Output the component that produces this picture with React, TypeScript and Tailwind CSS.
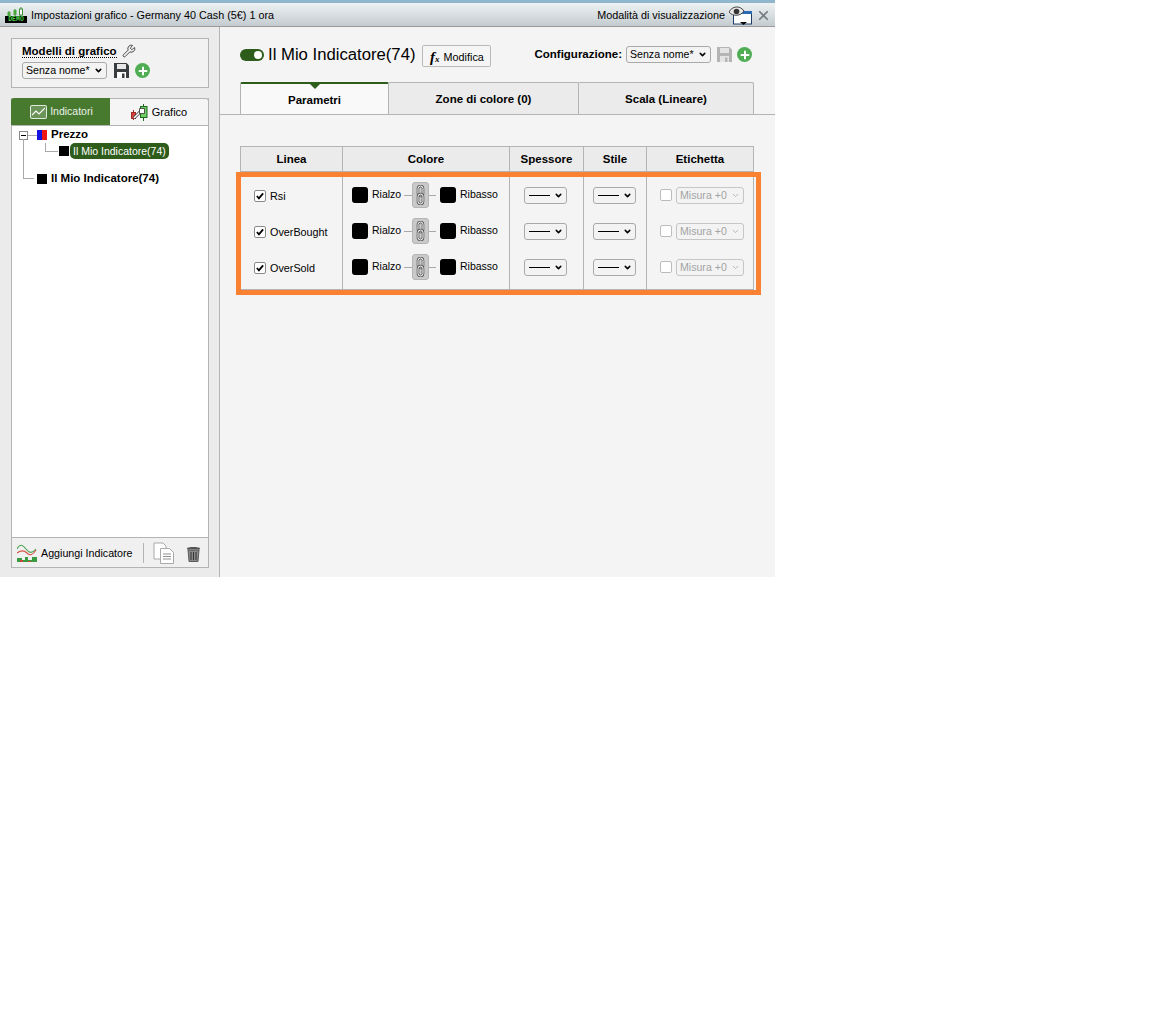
import React from 'react';
import { ChevronDown, Plus, Wrench, X } from 'lucide-react';

const font = "font-['Liberation_Sans',Arial,sans-serif]";

const SaveIcon = ({ muted = false }: { muted?: boolean }) => (
  <svg width="15" height="15" viewBox="0 0 15 15">
    <path d="M0 0h12.500L15 2.500V15H0z" fill={muted ? '#b5b5b5' : '#3a3d40'} />
    <rect x="3" y="1" width="9" height="5" fill={muted ? '#e4e4e4' : '#e8e8e8'} />
    <rect x="3" y="9" width="9" height="6" fill={muted ? '#e4e4e4' : '#fff'} />
    <rect x="8" y="10.500" width="2.500" height="4.500" fill={muted ? '#b5b5b5' : '#3a3d40'} />
  </svg>
);

const AddIcon = () => (
  <span className="flex h-[15px] w-[15px] items-center justify-center rounded-full bg-[#4fae54]">
    <Plus size={12} strokeWidth={4} className="text-white" />
  </span>
);

const FakeSelect = ({ label, className, disabled = false }: { label: React.ReactNode; className: string; disabled?: boolean }) => (
  <div
    className={`flex h-[17px] items-center justify-between rounded-[3px] border bg-[#f3f3f3] pl-[3px] pr-[3px] text-[10.600px] ${
      disabled ? 'border-[#c6c6c6] text-[#a3a3a3]' : 'border-[#a9a9a9] text-black'
    } ${className}`}
  >
    <span className="whitespace-nowrap leading-none">{label}</span>
    <ChevronDown size={9} strokeWidth={disabled ? 2 : 4} className={disabled ? 'text-[#a3a3a3]' : 'text-black'} />
  </div>
);

const LineSelect = () => (
  <FakeSelect className="w-[43px]" label={<span className="ml-px block h-px w-[21px] bg-black" />} />
);

const Checkbox = ({ checked = false }: { checked?: boolean }) => (
  <span
    className={`flex h-[12px] w-[12px] shrink-0 items-center justify-center rounded-[2px] border bg-white ${
      checked ? 'border-[#8a8a8a]' : 'border-[#bcbcbc]'
    }`}
  >
    {checked && (
      <svg width="8" height="8" viewBox="0 0 9 9">
        <path d="M1 4.500l2.300 2.600L8 1.500" fill="none" stroke="#000" strokeWidth="2" />
      </svg>
    )}
  </span>
);

const ChainIcon = () => (
  <span className="flex h-[26px] w-[17px] shrink-0 items-center justify-center rounded-[3px] border border-[#b5b5b5] bg-[#c9c9c9]">
    <svg width="11" height="20" viewBox="0 0 11 20" fill="none">
      <rect x="3" y="1" width="5" height="10" rx="2.500" stroke="#555" strokeWidth="2.600" />
      <rect x="3" y="1" width="5" height="10" rx="2.500" stroke="#fff" strokeWidth="1" />
      <rect x="3" y="9" width="5" height="10" rx="2.500" stroke="#555" strokeWidth="2.600" />
      <rect x="3" y="9" width="5" height="10" rx="2.500" stroke="#fff" strokeWidth="1" />
    </svg>
  </span>
);

const ColorPair = () => (
  <div className="flex h-[36px] items-center pl-[9px] text-[10.500px] text-black">
    <span className="h-[16px] w-[16px] rounded-[3px] bg-black" />
    <span className="ml-[4px] w-[29px]">Rialzo</span>
    <span className="ml-[3px] h-px w-[8px] bg-[#a8a8a8]" />
    <ChainIcon />
    <span className="mr-[4px] h-px w-[7px] bg-[#a8a8a8]" />
    <span className="h-[16px] w-[16px] rounded-[3px] bg-black" />
    <span className="ml-[4px]">Ribasso</span>
  </div>
);

const rows = ['Rsi', 'OverBought', 'OverSold'];
const columns = [
  { title: 'Linea', width: 'w-[101px]' },
  { title: 'Colore', width: 'w-[167px]' },
  { title: 'Spessore', width: 'w-[74px]' },
  { title: 'Stile', width: 'w-[63px]' },
  { title: 'Etichetta', width: 'w-[107px]' },
];

const ParamsTable = () => (
  <div className="relative ml-[20px] mt-[31px] w-[514px] border border-[#b4b4b4]">
    <div className="flex h-[25px] border-b border-[#b4b4b4] bg-[#ebebeb]">
      {columns.map((c, i) => (
        <div
          key={c.title}
          className={`flex items-center justify-center pt-[2px] text-[11.500px] font-bold text-black ${c.width} ${i > 0 ? 'border-l border-[#b4b4b4]' : ''}`}
        >
          {c.title}
        </div>
      ))}
    </div>
    <div className="flex h-[117px]">
      <div className="w-[101px] pt-[5px]">
        {rows.map((r) => (
          <div key={r} className="flex h-[36px] items-center gap-[4px] pl-[13px] pt-[2px] text-[10.800px] text-black">
            <Checkbox checked />
            <span>{r}</span>
          </div>
        ))}
      </div>
      <div className="w-[167px] border-l border-[#b4b4b4] pt-[5px]">
        {rows.map((r) => (
          <ColorPair key={r} />
        ))}
      </div>
      <div className="w-[74px] border-l border-[#b4b4b4] pt-[5px]">
        {rows.map((r) => (
          <div key={r} className="flex h-[36px] items-center pl-[14px]">
            <LineSelect />
          </div>
        ))}
      </div>
      <div className="w-[63px] border-l border-[#b4b4b4] pt-[5px]">
        {rows.map((r) => (
          <div key={r} className="flex h-[36px] items-center pl-[9px]">
            <LineSelect />
          </div>
        ))}
      </div>
      <div className="w-[107px] border-l border-[#b4b4b4] pt-[5px]">
        {rows.map((r) => (
          <div key={r} className="flex h-[36px] items-center gap-[4px] pl-[13px]">
            <Checkbox />
            <FakeSelect disabled className="w-[68px]" label="Misura +0" />
          </div>
        ))}
      </div>
    </div>
    <div className="absolute left-[-5px] top-[25px] h-[123px] w-[525px] border-[5px] border-[#fb8132]" />
  </div>
);

const Tree = () => (
  <div className="relative h-[413px] border-y border-[#b4b4b4] bg-white text-[11.500px] text-black">
    <div className="flex h-[17px] items-center pl-[7px] pt-[1px]">
      <span className="flex h-[9px] w-[9px] items-center justify-center border border-[#888] bg-white">
        <span className="h-px w-[5px] bg-black" />
      </span>
      <span className="h-px w-[9px] bg-[#aaa]" />
      <span className="flex h-[10px] w-[10px]">
        <span className="w-[5px] bg-[#1414e0]" />
        <span className="w-[5px] bg-[#f01414]" />
      </span>
      <span className="ml-[4px] font-bold">Prezzo</span>
    </div>
    <div className="flex h-[15px] items-center pl-[47px]">
      <span className="h-[10px] w-[10px] bg-black" />
      <span className="ml-px rounded-[5px] bg-[#2d5c1b] px-[3px] py-px text-[10.500px] leading-[14px] text-white">Il Mio Indicatore(74)</span>
    </div>
    <div className="flex h-[27px] items-center pl-[25px] pt-[15px]">
      <span className="h-[10px] w-[10px] bg-black" />
      <span className="ml-[4px] font-bold">Il Mio Indicatore(74)</span>
    </div>
    {/* tree connector lines */}
    <span className="absolute left-[11px] top-[13px] h-[39px] w-px bg-[#aaa]" />
    <span className="absolute left-[11px] top-[52px] h-px w-[11px] bg-[#aaa]" />
    <span className="absolute left-[33px] top-[17px] h-[8px] w-px bg-[#aaa]" />
    <span className="absolute left-[33px] top-[25px] h-px w-[13px] bg-[#aaa]" />
  </div>
);

const ChartIcon = () => (
  <span className="flex h-[14px] w-[17px] items-center justify-center rounded-[2px] border border-white/80 bg-white/20">
    <svg width="13" height="10" viewBox="0 0 13 10" fill="none" stroke="#fff" strokeWidth="1.100">
      <path d="M0 8l4-4 3 3 6-6" />
    </svg>
  </span>
);

const CandleIcon = () => (
  <svg width="17" height="17" viewBox="0 0 17 17" fill="none">
    <path d="M2.500 6v10" stroke="#9c2b26" />
    <rect x="0.500" y="8.500" width="4" height="6" fill="#d8423a" stroke="#9c2b26" />
    <path d="M12.500 0v17" stroke="#1f6a21" />
    <rect x="9.500" y="2.500" width="6.500" height="11" fill="#6fcb62" stroke="#1f6a21" />
    <path d="M3 14l7-7" stroke="#333" strokeWidth="3" />
    <path d="M3 14l7-7" stroke="#fff" strokeWidth="1.600" />
    <path d="M8.500 4.500h5v5h-5z" fill="#fff" stroke="#333" strokeWidth=".8" />
  </svg>
);

const AddIndicatorIcon = () => (
  <svg width="20" height="18" viewBox="0 0 20 18" fill="none">
    <path d="M0 5c3-6 6-4 9 0s6 5 10 0" stroke="#48a24c" strokeWidth="1.100" />
    <path d="M0 9c4-3 7-3 10 0s6 2 9-3" stroke="#d5564c" strokeWidth="1.100" />
    <path d="M0 18v-4h5v2h3v-3h3v3h4v-3h5v5z" fill="#3a9a3f" />
    <path d="M3 18v-2h3v2zM11 18v-1h3v1z" fill="#c9473d" />
  </svg>
);

const CopyIcon = () => (
  <svg width="22" height="22" viewBox="0 0 22 22" fill="#fff" stroke="#a9a9a9" strokeWidth="1">
    <path d="M1 1h9l3 3v13H1z" />
    <path d="M7.500 6.500h9l4 4v11h-13z" />
    <path d="M10 12h8M10 14.500h8M10 17h8" stroke="#8f8f8f" />
  </svg>
);

const TrashIcon = () => (
  <svg width="15" height="17" viewBox="0 0 15 17">
    <path d="M1 3.500C1 1.500 14 1.500 14 3.500v1H1z" fill="#555" />
    <path d="M2 5h11l-1 11.500H3z" fill="#8a8a8a" stroke="#444" strokeWidth=".8" />
    <path d="M5 7v8M7.500 7v8M10 7v8" stroke="#333" strokeWidth="1" />
  </svg>
);

const EyeWindowIcon = () => (
  <svg width="24" height="19" viewBox="0 0 24 19" className="block">
    <rect x="4.500" y="5.500" width="18" height="12.500" fill="#fff" stroke="#1c3d66" />
    <rect x="4" y="5" width="19" height="3" fill="#2c6cb4" />
    <path d="M0 6c3-6 11-7 15-1-3 5-11 6-15 1z" fill="#e8e8e8" stroke="#444" />
    <circle cx="7.500" cy="5.500" r="2.800" fill="#333" />
    <path d="M11 16h7l-3.500 3z" fill="#000" />
  </svg>
);

const DemoLogo = () => (
  <span className="flex w-[22px] shrink-0 flex-col items-center">
    <svg width="20" height="9" viewBox="0 0 20 9" fill="none" className="block">
      <path d="M3 4v5M9 2v7M15 0v9" stroke="#3f8f3a" />
      <rect x="1.500" y="5" width="3" height="4" fill="#4aa63f" />
      <rect x="7.500" y="3" width="3" height="5" fill="#4aa63f" />
      <rect x="13.500" y="2" width="3" height="6" fill="#fff" stroke="#3f8f3a" />
    </svg>
    <span className="block h-[7px] w-[22px] overflow-hidden bg-black text-center font-['Liberation_Mono',monospace] text-[6.500px] font-bold leading-[7px] text-[#4ed04a]">DEMO</span>
  </span>
);

const Sidebar = () => (
  <aside className="w-[220px] shrink-0 border-r border-[#b4b4b4] bg-[#ebebeb] pl-[11px] pr-[10px] pt-[11px]">
    <div className="h-[50px] border border-[#b4b4b4] bg-[#f2f2f2] pl-[10px] pt-[5px]">
      <div className="flex items-center gap-[5px] text-[11.500px] font-bold leading-[16px] text-black">
        <span className="border-b border-dotted border-black leading-[12px]">Modelli di grafico</span>
        <Wrench size={14} strokeWidth={1.200} />
      </div>
      <div className="mt-[4px] flex items-center">
        <FakeSelect label="Senza nome*" className="w-[85px]" />
        <span className="ml-[7px] flex"><SaveIcon /></span>
        <span className="ml-[6px]"><AddIcon /></span>
      </div>
    </div>
    <div className="mt-[10px] h-[470px] border-x border-b border-[#b4b4b4]">
      <div className="flex h-[27px] text-[10.500px]">
        <div className="-ml-px flex w-[99px] items-center justify-center gap-[3px] rounded-tl-[3px] bg-[#477a2f] pl-[2px] pt-[1px] text-white">
          <ChartIcon />
          <span className="opacity-90">Indicatori</span>
        </div>
        <div className="-mr-px flex flex-1 items-center justify-center gap-[4px] rounded-tr-[3px] border-r border-t border-[#b4b4b4] bg-[#f5f5f5] pt-[1px] text-[11px] text-black">
          <CandleIcon />
          <span>Grafico</span>
        </div>
      </div>
      <Tree />
      <div className="flex h-[29px] items-center bg-[#f0f0f0] pl-[5px] pt-px text-[10.700px] text-black">
        <AddIndicatorIcon />
        <span className="ml-[4px] whitespace-nowrap">Aggiungi Indicatore</span>
        <span className="ml-[10px] h-[20px] w-px bg-[#b4b4b4]" />
        <span className="ml-[9px] flex"><CopyIcon /></span>
        <span className="ml-[11px] flex"><TrashIcon /></span>
      </div>
    </div>
  </aside>
);

const tabs = ['Parametri', 'Zone di colore (0)', 'Scala (Lineare)'];
const tabWidths = ['w-[149px]', 'w-[191px]', 'w-[176px]'];

const Main = () => (
  <main className="flex-1 bg-[#f4f4f4]">
    <div className="flex h-[55px] items-start pl-[20px] pr-[23px] pt-[18px]">
      <span className="mt-[4px] flex h-[12px] w-[24px] items-center justify-end rounded-full bg-[#2d5c1b] pr-[2px]">
        <span className="h-[8px] w-[8px] rounded-full bg-white" />
      </span>
      <span className="ml-[4px] whitespace-nowrap text-[16.700px] leading-[20px] text-black">Il Mio Indicatore(74)</span>
      <div className="ml-[7px] flex h-[22px] w-[69px] items-center justify-center gap-[4px] rounded-[2px] border border-[#b9b9b9] bg-[#f5f5f5] pt-[2px] text-[10.800px] text-black">
        <span className="font-['Liberation_Serif',serif] text-[15px] font-bold italic leading-none">
          f<span className="text-[9px]">x</span>
        </span>
        <span>Modifica</span>
      </div>
      <div className="ml-auto mt-[1px] flex items-center text-[11.500px]">
        <span className="font-bold text-black">Configurazione:</span>
        <FakeSelect label="Senza nome*" className="ml-[4px] w-[85px]" />
        <span className="ml-[6px] flex"><SaveIcon muted /></span>
        <span className="ml-[5px]"><AddIcon /></span>
      </div>
    </div>
    <div className="flex h-[33px] border-b border-[#b4b4b4] pl-[20px]">
      {tabs.map((t, i) => (
        <div
          key={t}
          className={`relative flex items-center justify-center rounded-t-[2px] border-x pt-[3px] text-[11.500px] font-bold text-black ${tabWidths[i]} ${
            i === 0
              ? 'z-10 border-x-[#b4b4b4] border-t-2 border-t-[#2d5c1b] bg-[#f9f9f9]'
              : '-ml-px border-t border-[#b4b4b4] bg-[#ebebeb]'
          }`}
        >
          {i === 0 && (
            <span className="absolute top-0 left-1/2 h-0 w-0 -translate-x-1/2 border-x-[5px] border-t-[5px] border-x-transparent border-t-[#2d5c1b]" />
          )}
          {t}
        </div>
      ))}
    </div>
    <ParamsTable />
  </main>
);

export default function App() {
  return (
    <div className={`h-[1013px] w-[1162px] bg-white ${font}`}>
      <div className="flex h-[577px] w-[775px] flex-col">
        <header className="flex h-[27px] shrink-0 items-center border-b border-t-[3px] border-b-[#9a9a9a] border-t-[#8fb6cc] bg-gradient-to-b from-[#eef2f3] to-[#c4ccd0] pl-[5px] pr-[4px] pt-px text-[10.800px] text-black">
          <DemoLogo />
          <span className="ml-[4px] whitespace-nowrap">Impostazioni grafico - Germany 40 Cash (5€) 1 ora</span>
          <span className="ml-auto whitespace-nowrap">Modalità di visualizzazione</span>
          <span className="ml-[4px] flex"><EyeWindowIcon /></span>
          <X size={15} strokeWidth={2.800} className="ml-[3px] text-[#757c80]" />
        </header>
        <div className="flex flex-1">
          <Sidebar />
          <Main />
        </div>
      </div>
    </div>
  );
}
